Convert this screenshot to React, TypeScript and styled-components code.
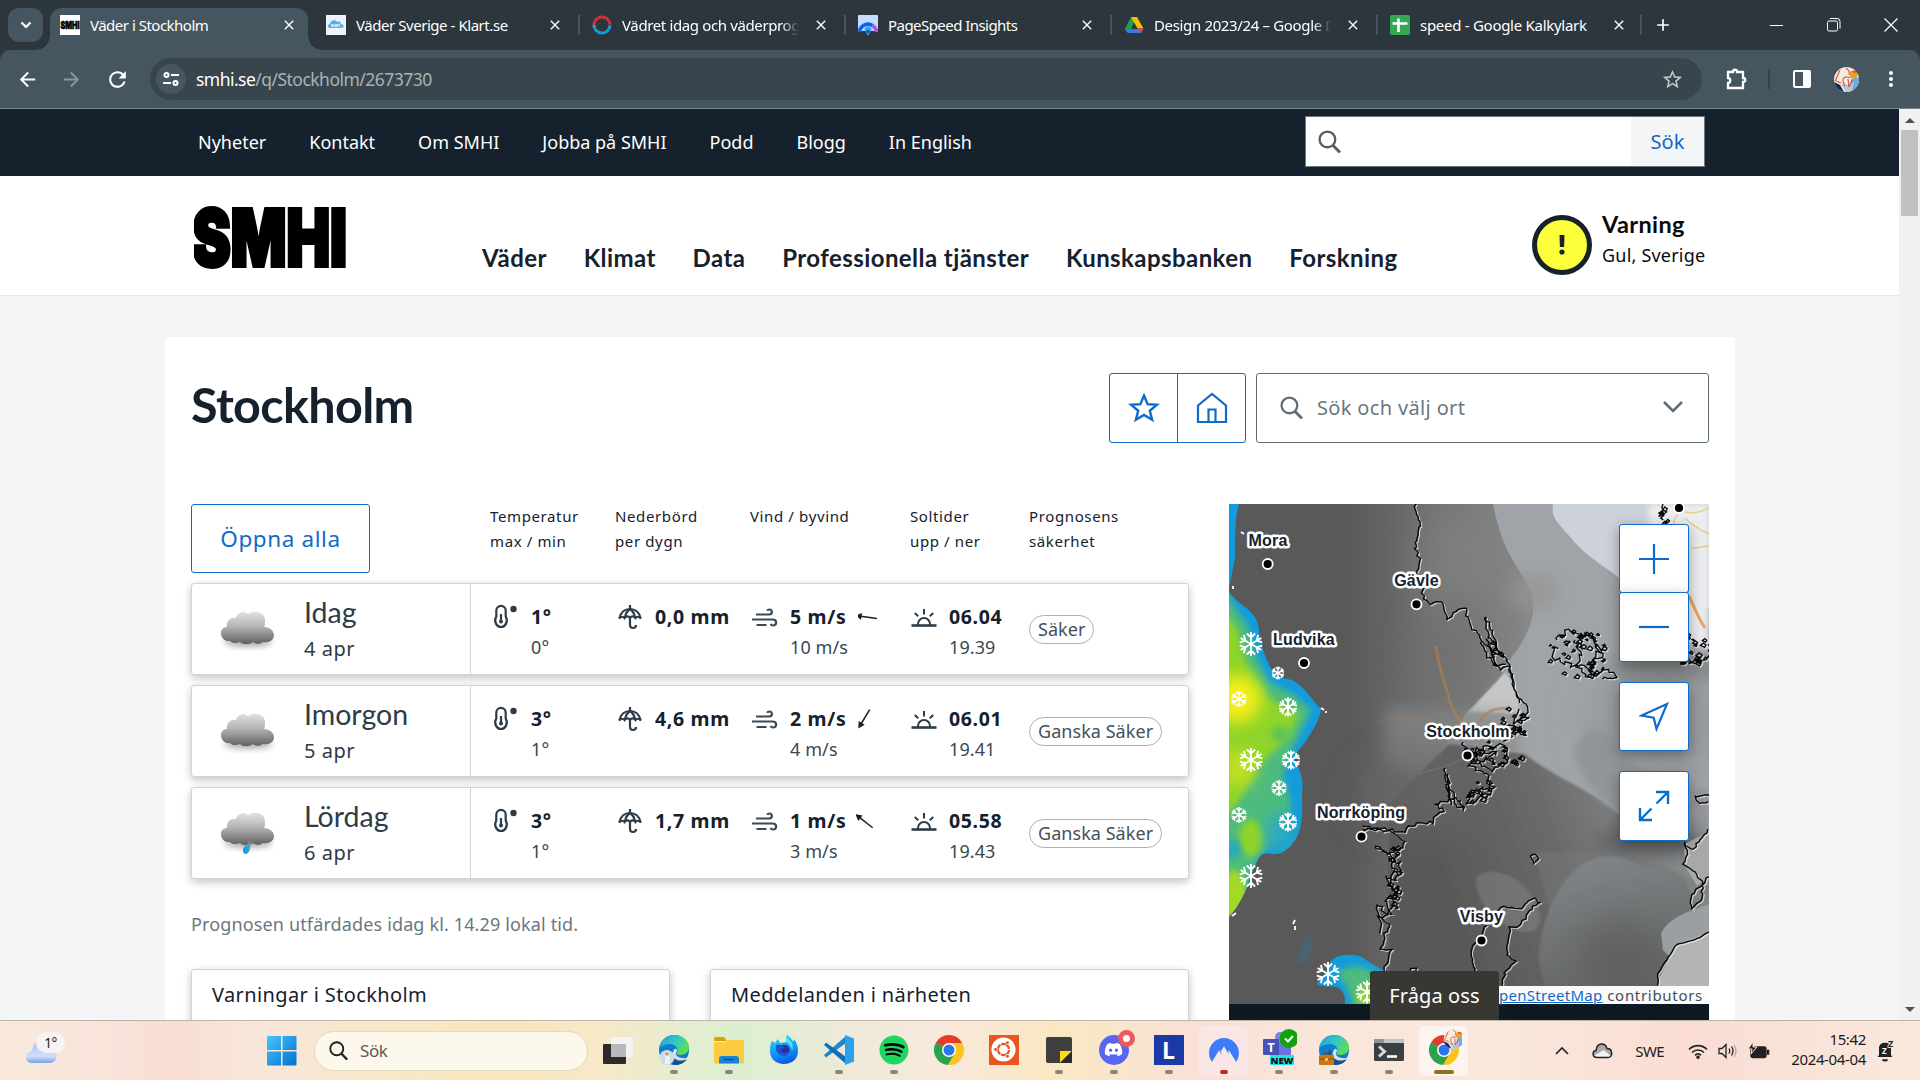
import React from "react";
import styled, { createGlobalStyle, css } from "styled-components";
import { FaSpotify, FaDiscord, FaUbuntu } from "react-icons/fa";
import { SiNordvpn } from "react-icons/si";
import { MdArrowBack, MdArrowForward, MdRefresh, MdStarBorder, MdMoreVert, MdClose, MdAdd } from "react-icons/md";

const ui = `"Noto Sans", "Open Sans", sans-serif`;
const body = `"Noto Sans", "Open Sans", sans-serif`;
const display = `Lato, "Open Sans", sans-serif`;
const ink = "#15212c";
const blue = "#0f6bc9";

const Global = createGlobalStyle`
  * { box-sizing: border-box; }
  html, body { margin: 0; padding: 0; overflow: hidden; background: #f4f5f7; }
  svg { display: block; flex: none; }
`;

const Screen = styled.div`
  width: 1920px;
  height: 1080px;
  display: flex;
  flex-direction: column;
  overflow: hidden;
  font-family: ${body};
  color: ${ink};
`;

/* ---------- browser chrome ---------- */

const TabStrip = styled.div`
  height: 50px;
  flex: none;
  display: flex;
  align-items: flex-start;
  padding: 8px 0 0 8px;
  background: #2c363c;
  font-family: ${ui};
`;

const TabSearch = styled.div`
  width: 35px;
  height: 34px;
  margin-right: 7px;
  border-radius: 11px;
  background: #455660;
  display: flex;
  align-items: center;
  justify-content: center;
`;

const Tab = styled.div<{ $active?: boolean; $width?: number }>`
  position: relative;
  width: ${(p) => p.$width ?? 266}px;
  height: 42px;
  display: flex;
  align-items: center;
  padding: 0 0 8px 10px;
  color: #fff;
  ${(p) =>
    p.$active &&
    css`
      width: 258px;
      margin-right: 8px;
      background: #455660;
      border-radius: 12px 12px 0 0;
      &::before,
      &::after {
        content: "";
        position: absolute;
        bottom: 0;
        width: 14px;
        height: 14px;
      }
      &::before {
        left: -14px;
        background: radial-gradient(circle at 0 0, transparent 13.5px, #455660 14px);
      }
      &::after {
        right: -14px;
        background: radial-gradient(circle at 100% 0, transparent 13.5px, #455660 14px);
      }
    `}
`;

const TabTitle = styled.span<{ $spacing: number; $fade?: boolean }>`
  width: 177px;
  margin: 0 14px 0 10px;
  overflow: hidden;
  white-space: nowrap;
  font-size: 15px;
  letter-spacing: ${(p) => p.$spacing}px;
  line-height: 22px;
  ${(p) => p.$fade && css`mask-image: linear-gradient(90deg, #000 90%, transparent 100%);`}
`;

const TabDivider = styled.i`
  width: 2px;
  height: 20px;
  margin-left: auto;
  margin-right: 2px;
  background: #455660;
`;

const NewTab = styled.div`
  height: 34px;
  padding-left: 9px;
  display: flex;
  align-items: center;
  color: #fff;
`;

const WindowButtons = styled.div`
  margin-left: auto;
  height: 34px;
  display: flex;
  align-items: center;
  gap: 43px;
  padding-right: 22px;
`;

const ToolbarBack = styled.div`
  flex: none;
  background: #2c363c;
`;

const Toolbar = styled.div`
  height: 59px;
  display: flex;
  align-items: center;
  padding-left: 16px;
  background: #455660;
  border-bottom: 1px solid #748790;
  border-radius: 10px 10px 0 0;
  color: #fff;
  font-family: ${ui};
`;

const ToolIcon = styled.span<{ $w: number; $dim?: boolean }>`
  width: ${(p) => p.$w}px;
  display: flex;
  color: ${(p) => (p.$dim ? "#8a979e" : "#fff")};
`;

const Address = styled.div`
  width: 1552px;
  height: 42px;
  margin-right: 22px;
  border-radius: 21px;
  background: #39454c;
  display: flex;
  align-items: center;
  padding: 0 18px 0 6px;
  font-size: 17.5px;
  letter-spacing: -0.53px;
  color: #a9b2b7;
  b { font-weight: 400; color: #fff; }
  > svg:last-child { margin-left: auto; color: #c3c9cc; }
`;

const SiteInfo = styled.span`
  width: 30px;
  height: 30px;
  margin-right: 10px;
  border-radius: 50%;
  background: #455660;
  display: flex;
  align-items: center;
  justify-content: center;
`;

const ToolDivider = styled.i`
  width: 2px;
  height: 20px;
  margin: 0 22px 0 20px;
  background: #35424a;
`;

/* ---------- viewport ---------- */

const Viewport = styled.div`
  height: 911px;
  flex: none;
  display: flex;
  overflow: hidden;
`;

const Site = styled.div`
  width: 1899px;
  height: 911px;
  overflow: hidden;
  background: #f4f5f7;
`;

const ScrollTrack = styled.div`
  width: 21px;
  background: #f1f1f1;
  display: flex;
  flex-direction: column;
  align-items: center;
  justify-content: space-between;
`;

const ScrollTop = styled.div`
  display: flex;
  flex-direction: column;
  align-items: center;
`;

const ScrollArrow = styled.i<{ $down?: boolean }>`
  width: 0;
  height: 0;
  margin: ${(p) => (p.$down ? "0 0 8px" : "9px 0 7px")};
  border: 5px solid transparent;
  border-width: ${(p) => (p.$down ? "5px 5px 0" : "0 5px 5px")};
  border-color: ${(p) => (p.$down ? "#505050 transparent transparent" : "transparent transparent #505050")};
`;

const ScrollThumb = styled.i`
  width: 17px;
  height: 86px;
  background: #c1c1c1;
`;

const TopBar = styled.div`
  height: 67px;
  display: flex;
  align-items: center;
  justify-content: space-between;
  padding: 0 194px 0 198px;
  background: ${ink};
`;

const TopLinks = styled.nav`
  display: flex;
  gap: 43px;
  margin-top: -2px;
  font-size: 18px;
  color: #fff;
`;

const SiteSearch = styled.div`
  width: 400px;
  height: 51px;
  margin-top: -3px;
  display: flex;
  align-items: center;
  justify-content: space-between;
  background: #fff;
  border: 1px solid #6a7780;
  padding-left: 12px;
`;

const SearchButton = styled.div`
  width: 73px;
  height: 49px;
  background: #f4f5f7;
  color: #1067c8;
  font-size: 20px;
  display: flex;
  align-items: center;
  justify-content: center;
`;

const Header = styled.header`
  height: 120px;
  display: flex;
  padding-left: 194px;
  background: #fff;
  border-bottom: 1px solid #e6e9ed;
`;

const MainNav = styled.nav`
  display: flex;
  gap: 36.8px;
  padding: 65px 0 0 135px;
  font: 700 24px/34px ${display};
  letter-spacing: 0.43px;
  white-space: nowrap;
`;

const Warning = styled.div`
  display: flex;
  gap: 10px;
  margin-left: auto;
  padding: 39px 194px 0 0;
`;

const WarningBadge = styled.div`
  width: 60px;
  height: 60px;
  border-radius: 50%;
  border: 5px solid ${ink};
  background: #fdff3a;
  display: flex;
  align-items: center;
  justify-content: center;
`;

const WarningText = styled.div`
  width: 103px;
  margin-top: -6px;
  color: #0a0a0a;
  white-space: nowrap;
  h4 { margin: 0; font: 700 23.5px/31px ${display}; letter-spacing: 0.4px; }
  p { margin: 0; font-size: 18px; line-height: 31px; letter-spacing: 0.2px; }
`;

const Card = styled.main`
  width: 1570px;
  height: 700px;
  margin: 41px 0 0 165px;
  padding: 36px 26px 0;
  background: #fff;
  border-radius: 4px 4px 0 0;
`;

const TitleRow = styled.div`
  display: flex;
  height: 70px;
  margin-bottom: 61px;
`;

const Title = styled.h1`
  margin: 1px auto 0 0;
  font: 700 48.5px/60px ${display};
  letter-spacing: -0.65px;
`;

const ButtonPair = styled.div`
  width: 137px;
  display: grid;
  grid-template-columns: 67px 68px;
  margin-right: 10px;
  border: 1px solid ${blue};
  border-radius: 3px;
  span {
    display: flex;
    align-items: center;
    justify-content: center;
  }
  span + span { border-left: 1px solid ${blue}; }
`;

const PlaceSelect = styled.div`
  width: 453px;
  border: 1px solid #5f6d76;
  border-radius: 3px;
  display: flex;
  align-items: center;
  padding: 0 25px 2px 23px;
  font-size: 20px;
  letter-spacing: 0.35px;
  color: #6a7780;
  span { margin: 0 auto 0 14px; }
`;

const Columns = styled.div`
  display: grid;
  grid-template-columns: 998px 480px;
  justify-content: space-between;
`;

const dataColumns = "125px 135px 160px 119px 1fr";

const TableHead = styled.div`
  height: 79px;
  display: flex;
`;

const OpenAll = styled.div`
  width: 179px;
  height: 69px;
  margin-right: 120px;
  flex: none;
  border: 1px solid ${blue};
  border-radius: 3px;
  color: ${blue};
  font-size: 22.5px;
  letter-spacing: 0.6px;
  display: flex;
  align-items: center;
  justify-content: center;
`;

const Labels = styled.div`
  flex: 1;
  display: grid;
  grid-template-columns: ${dataColumns};
  font-size: 15px;
  line-height: 25px;
  letter-spacing: 0.62px;
  white-space: pre-line;
`;

const Row = styled.section`
  height: 92px;
  margin-bottom: 10px;
  display: flex;
  border: 1px solid #cfd3da;
  border-radius: 3px;
  background: #fff;
  box-shadow: 0 3px 8px rgba(0, 0, 0, 0.24);
  color: #2c3c48;
`;

const DayCell = styled.div`
  width: 279px;
  display: flex;
  border-right: 1px solid #cfd3da;
  padding: 9px 0 0 20px;
`;

const DayText = styled.div`
  margin-left: 18px;
  h3 { margin: 0 0 4px; font: 400 28.5px/38px ${display}; letter-spacing: 0; }
  p { margin: 0; font-size: 20px; line-height: 28px; letter-spacing: 0.55px; }
`;

const DataCells = styled.div`
  flex: 1;
  display: grid;
  grid-template-columns: ${dataColumns};
  padding: 17px 0 0 19px;
`;

const Cell = styled.div`
  display: flex;
`;

const IconBox = styled.div<{ $w: number }>`
  width: ${(p) => p.$w}px;
  padding-top: 2px;
`;

const Values = styled.div`
  b { display: block; font-size: 19.5px; line-height: 31px; letter-spacing: 0.65px; color: ${ink}; white-space: nowrap; }
  span { display: block; font-size: 18px; line-height: 31px; letter-spacing: 0.1px; color: #3a4852; white-space: nowrap; }
`;

const ArrowBox = styled.div`
  margin: 3px 0 0 10px;
`;

const Pill = styled.span`
  height: 29px;
  margin-top: 14px;
  padding: 0 8px;
  border: 1px solid #a9b1ba;
  border-radius: 15px;
  font-size: 18px;
  line-height: 27px;
  letter-spacing: 0.05px;
  color: #44515b;
`;

const Issued = styled.p`
  margin: 33px 0 32px;
  font-size: 18px;
  line-height: 25px;
  letter-spacing: 0.14px;
  color: #6a7780;
`;

const Notices = styled.div`
  display: grid;
  grid-template-columns: 479px 479px;
  justify-content: space-between;
`;

const Notice = styled.div`
  height: 100px;
  padding: 11px 20px;
  border: 1px solid #cfd3da;
  border-radius: 3px;
  background: #fff;
  box-shadow: 0 3px 8px rgba(0, 0, 0, 0.24);
  font-size: 20px;
  line-height: 28px;
  letter-spacing: 0.38px;
`;

const MapPanel = styled.aside`
  position: relative;
  width: 480px;
  height: 600px;
  background: #0d1a21;
`;

const MapControls = styled.div`
  position: absolute;
  top: 20px;
  right: 20px;
  width: 70px;
  display: flex;
  flex-direction: column;
`;

const MapButton = styled.div<{ $gap?: number; $joined?: boolean }>`
  height: ${(p) => (p.$joined ? 69 : 70)}px;
  margin-top: ${(p) => p.$gap ?? 0}px;
  border: 1px solid ${blue};
  border-radius: 3px;
  background: #fff;
  box-shadow: 0 4px 14px rgba(0, 0, 0, 0.35);
  display: flex;
  align-items: center;
  justify-content: center;
`;

const Attribution = styled.div`
  position: absolute;
  top: 482px;
  right: 0;
  height: 18px;
  padding: 0 6px;
  background: rgba(255, 255, 255, 0.97);
  font-size: 15px;
  line-height: 18px;
  letter-spacing: 0.7px;
  color: #444d55;
  white-space: nowrap;
  a { color: ${blue}; text-decoration: underline; letter-spacing: 0.3px; }
`;

const AskUs = styled.div`
  position: absolute;
  top: 467px;
  left: 141px;
  width: 129px;
  height: 60px;
  border-radius: 3px 3px 0 0;
  background: #383732;
  color: #fff;
  font-size: 20px;
  line-height: 50px;
  letter-spacing: 0.1px;
  text-align: center;
`;

/* ---------- taskbar ---------- */

const Taskbar = styled.footer`
  height: 60px;
  flex: none;
  display: flex;
  align-items: center;
  border-top: 1px solid #bdb3a8;
  background: linear-gradient(90deg, #f8e9dc 0, #f9e2d9 130px, #f9ddd4 170px, #f8e6da 260px, #f7e8c6 390px, #f9e6be 510px, #f7e8c8 600px, #e6edcf 680px, #dcefd0 735px, #efe9da 860px, #f8e9dc 940px, #fae7c2 1050px, #f9e6cc 1120px, #fadfd6 1200px, #fae6da 1330px, #f9e8dc 1500px, #fadcd3 1690px, #f9e2d8 1790px, #f9e9dc 1920px);
  font-family: ${ui};
  color: #1b1b1b;
`;

const WeatherWidget = styled.div`
  width: 267px;
  padding-left: 24px;
`;

const TaskSearch = styled.div`
  width: 274px;
  height: 40px;
  margin: 0 15px 0 17px;
  display: flex;
  align-items: center;
  padding-left: 14px;
  border: 1px solid #e3d9be;
  border-radius: 20px;
  background: #fdf8ec;
  font-size: 17px;
  letter-spacing: -0.4px;
  color: #5c5953;
  span { margin-left: 12px; }
`;

const Apps = styled.div`
  display: grid;
  grid-template-columns: repeat(15, 55px);
  margin-left: 13px;
`;

const AppSlot = styled.div<{ $tile?: string }>`
  width: 49px;
  height: 50px;
  justify-self: center;
  display: flex;
  flex-direction: column;
  align-items: center;
  padding-top: 9px;
  border-radius: 5px;
  background: ${(p) => p.$tile ?? "transparent"};
`;

const AppIcon = styled.div`
  width: 30px;
  height: 30px;
  display: flex;
  justify-content: center;
  align-items: flex-end;
`;

const Indicator = styled.i<{ $color: string; $w: number }>`
  width: ${(p) => p.$w}px;
  height: 4px;
  margin-top: 5px;
  border-radius: 2px;
  background: ${(p) => p.$color};
`;

const Tray = styled.div`
  margin-left: auto;
  display: flex;
  align-items: center;
  padding-right: 25px;
`;

const Lang = styled.span`
  margin: 0 24px 0 22px;
  font-size: 15px;
  letter-spacing: -0.6px;
`;

const Clock = styled.div`
  width: 90px;
  margin: -4px 11px 0 6px;
  text-align: right;
  font-size: 15px;
  line-height: 20px;
  letter-spacing: -0.35px;
  white-space: nowrap;
`;

/* ---------- icons ---------- */

const Magnifier = ({ size, color, stroke = 2 }: { size: number; color: string; stroke?: number }) => (
  <svg width={size} height={size} viewBox="0 0 22 22" fill="none" stroke={color} strokeWidth={stroke}>
    <circle cx="9" cy="9" r="7.5" />
    <path d="M14.2 14.5L21 21.5" strokeWidth={stroke * 1.25} />
  </svg>
);

const Logo = () => (
  <svg width="153" height="120" viewBox="0 0 153 120">
    <text x="-2" y="89.5" fontFamily="Inter, Lato, sans-serif" fontWeight="900" fontSize="78.500" textLength="155" lengthAdjust="spacingAndGlyphs" stroke="#000" strokeWidth="4">
      SMHI
    </text>
  </svg>
);

const Cloud = ({ rain }: { rain?: boolean }) => (
  <svg width="74" height="74" viewBox="0 0 74 74">
    <defs>
      <linearGradient id="cloudFill" x1="0" y1="0" x2="0" y2="1">
        <stop offset="0" stopColor="#e2e2e2" />
        <stop offset="0.45" stopColor="#b4b4b4" />
        <stop offset="1" stopColor="#62605f" />
      </linearGradient>
      <linearGradient id="drop" x1="0.8" y1="0" x2="0.3" y2="1">
        <stop offset="0" stopColor="#8b949a" />
        <stop offset="0.5" stopColor="#2fa6e0" />
        <stop offset="1" stopColor="#0a9be6" />
      </linearGradient>
      <filter id="soft" x="-20%" y="-20%" width="140%" height="160%">
        <feGaussianBlur stdDeviation="3" />
      </filter>
    </defs>
    <g transform={rain ? "translate(0 -3)" : undefined}>
      <ellipse cx="36" cy="49" rx="24" ry="5" fill="#000" opacity="0.32" filter="url(#soft)" />
      <path
        d="M9 41c0-4 3-6 6-6-1-6 4-10 9-9 1-6 9-8 12-4 7-5 17-1 17 6 0 3 0 6-1 7 6 0 10 4 10 8 0 6-6 8-11 7-4 3-8 2-10 0-4 3-10 3-13 0-4 2-9 1-10-1-5 1-9-3-9-8z"
        transform="translate(0 -1)"
        fill="url(#cloudFill)"
      />
    </g>
    {rain && <path d="M38 43c1 5 0 14-4 14-4 0-4-6-1-8 3-2 4-4 5-6z" fill="url(#drop)" />}
  </svg>
);

const Thermo = () => (
  <svg width="30" height="28" viewBox="0 0 30 28" fill="none" stroke="#2c3c48" strokeWidth="2.2">
    <path d="M6.300 14V8a4.700 4.700 0 0 1 9.400 0v6c3 5-.5 10.500-4.700 10.500S3.300 19 6.300 14z" transform="translate(0 -.5)" />
    <path d="M11 11v8" />
    <circle cx="11" cy="18.500" r="2" fill="#2c3c48" stroke="none" />
    <circle cx="23.500" cy="6" r="3.200" fill="#2c3c48" stroke="none" />
  </svg>
);

const Umbrella = () => (
  <svg width="28" height="28" viewBox="0 0 28 28" fill="none" stroke="#2c3c48" strokeWidth="2.200">
    <path d="M4.500 15.500C5.500 9 10 6 15 6s9.500 3 10.500 9.500" />
    <path d="M15 2v4M15 6c-3 2-4.500 5-5 8.500M15 6c3 2 4.500 5 5 8.500" />
    <path d="M4 15.500c2-2.500 4.500-2 5.500-.5 1.500-2 4-2.500 5.500 0 1.500-2.500 4-2 5.500 0 1-1.500 3.500-2 5.500.5" />
    <path d="M15 15v7c0 4 6 4 6 0" />
  </svg>
);

const Wind = () => (
  <svg width="28" height="28" viewBox="0 0 28 28" fill="none" stroke="#3a4955" strokeWidth="2.200">
    <path d="M6 11.500h13c4 0 3.500-5 .5-5-1.200 0-2 .5-2.400 1.300M2 16.500h20.500c5 0 4.500 6 .5 6-1.300 0-2-.6-2.500-1.500M6.500 22h10" />
  </svg>
);

const Sunrise = () => (
  <svg width="28" height="28" viewBox="0 0 28 28" fill="none" stroke="#2c3c48" strokeWidth="2">
    <path d="M1.500 22.500h25" strokeWidth="2.600" />
    <path d="M8 22v-1a6 6 0 0 1 12 0v1" />
    <path d="M14 6v5.500M4.800 10l3.400 3.200M23.200 10l-3.400 3.200" />
  </svg>
);

const WindArrow = ({ angle }: { angle: number }) => (
  <svg width="26" height="26" viewBox="0 0 26 26">
    <g transform={`translate(-5 0) rotate(${angle} 13 13)`} stroke={ink} fill={ink}>
      <path d="M6 13h18" strokeWidth="1.500" />
      <path d="M2 13l6.500-3.500v7z" stroke="none" />
    </g>
  </svg>
);

/* ---------- favicons ---------- */

const SmhiIcon = () => (
  <svg width="20" height="20" viewBox="0 0 20 20">
    <rect width="20" height="20" fill="#fff" />
    <text x="0.500" y="13.500" fontFamily="Inter, sans-serif" fontWeight="900" fontSize="10" textLength="19" lengthAdjust="spacingAndGlyphs" stroke="#000" strokeWidth="0.600">SMHI</text>
  </svg>
);
const KlartIcon = () => (
  <svg width="20" height="20" viewBox="0 0 20 20">
    <rect width="20" height="20" fill="#eef2fa" />
    <path d="M4 13c-3 0-3-4 0-4 0-4 6-5 7-2 3-1 4 0 4 2 3 0 4 4 0 4z" fill="#58aee8" />
    <text x="5" y="12" fontFamily="Inter, sans-serif" fontWeight="700" fontSize="4" fill="#fff">klart</text>
  </svg>
);
const RingIcon = () => (
  <svg width="20" height="20" viewBox="0 0 20 20" fill="none" strokeWidth="3">
    <path d="M2 10a8 8 0 0 0 16 0" stroke="#17a3dc" strokeDasharray="3.700 .4" />
    <path d="M2 10a8 8 0 0 1 16 0" stroke="#d6323a" strokeDasharray="3.700 .4" />
  </svg>
);
const SpeedIcon = () => (
  <svg width="20" height="24" viewBox="0 -2 20 24">
    <rect width="20" height="20" rx="1" fill="#c5dcfb" />
    <path d="M0 20v-4h20v4z" fill="#2c363c" />
    <path d="M1.500 17a8.500 8.500 0 0 1 13-6.500" fill="none" stroke="#0a62f5" strokeWidth="3.500" />
    <path d="M14.500 10.500a8 8 0 0 1 4 6.500" fill="none" stroke="#b94be8" strokeWidth="3.500" />
    <path d="M6.500 15l3.500 6 3.500-6a3.500 3.500 0 0 0-7 0z" fill="#2fa8f7" />
    <circle cx="10" cy="16.500" r="1.800" fill="#0a4ed0" />
  </svg>
);
const DriveIcon = () => (
  <svg width="20" height="20" viewBox="0 0 20 20">
    <path d="M7 2h6L6 18H4l-3-4z" fill="#1ea350" />
    <path d="M7 2h6l6.500 11.500h-6z" fill="#fbbc04" />
    <path d="M1 14h18.500L17 18H4z" fill="#3c79e8" />
    <path d="M13.500 13.500h6L17 18z" fill="#ea4335" />
    <path d="M10 8l3 5.500H7z" fill="#2c363c" />
  </svg>
);
const SheetIcon = () => (
  <svg width="20" height="20" viewBox="0 0 20 20">
    <rect width="20" height="20" rx="2" fill="#34a853" />
    <path d="M8.500 3.500v13.500M2.500 8.500h15" stroke="#fff" strokeWidth="2.600" />
  </svg>
);

const Avatar = ({ size = 25 }: { size?: number }) => (
  <svg width={size} height={size} viewBox="0 0 25 25">
    <defs>
      <clipPath id="av"><circle cx="12.500" cy="12.500" r="12.500" /></clipPath>
    </defs>
    <g clipPath="url(#av)">
      <rect width="25" height="25" fill="#f6ebdf" />
      <path d="M0 15l6 3 4 7H0z" fill="#16264f" />
      <path d="M17 12l8-2v15h-9z" fill="#6fa9e0" />
      <path d="M7 17l5 8h6l2-10-4 3z" fill="#b8c4dc" />
      <path d="M6 3c-2 4-3 8-5 11M2 14l5 2M12 1c3 2 4 4 3 7M9 13c0-3 4-4 7-2M9 13c0 3 1 4 2 6M14 12l1 8M18 13l-3 7" stroke="#d5503f" strokeWidth="1.100" fill="none" />
      <circle cx="19.500" cy="7.500" r="4" fill="#e8a02c" />
      <path d="M17 5l5-2 1 3z" fill="#d5503f" />
    </g>
  </svg>
);

/* ---------- map ---------- */

type Pt = [number, number];

const random = (seed: number) => () => {
  seed = (seed * 16807) % 2147483647;
  return seed / 2147483647 - 0.5;
};

/** Subdivides a polyline and shakes each vertex so it reads as a coastline. */
const coast = (pts: Pt[], amp: number, seed: number) => {
  const r = random(seed);
  let d = `M${pts[0][0]} ${pts[0][1]}`;
  for (let i = 1; i < pts.length; i++) {
    const [x0, y0] = pts[i - 1];
    const [x1, y1] = pts[i];
    const n = Math.max(1, Math.round(Math.hypot(x1 - x0, y1 - y0) / 3));
    for (let k = 1; k <= n; k++) {
      const x = x0 + ((x1 - x0) * k) / n + r() * amp;
      const y = y0 + ((y1 - y0) * k) / n + r() * amp;
      d += `L${x.toFixed(1)} ${y.toFixed(1)}`;
    }
  }
  return d;
};

const islands = (cx: number, cy: number, w: number, h: number, count: number, seed: number) => {
  const r = random(seed);
  let d = "";
  for (let i = 0; i < count; i++) {
    const a = r() * Math.PI * 2;
    const q = Math.sqrt(r() + 0.5);
    const x = cx + (Math.cos(a) * q * w) / 2;
    const y = cy + (Math.sin(a) * q * h) / 2;
    const s = 0.8 + (r() + 0.5) * 2.6;
    d += `M${(x - s).toFixed(1)} ${y.toFixed(1)}l${s.toFixed(1)} ${(-s + r() * 2).toFixed(1)}l${(s * 0.9).toFixed(1)} ${(s * 0.7).toFixed(1)}l${(-s * 0.5 + r()).toFixed(1)} ${(s * 0.8).toFixed(1)}z`;
  }
  return d;
};

const shores = [
  coast([[187, 0], [186, 8], [192, 18], [189, 30], [187, 45], [190, 55], [188, 68], [194, 82], [194, 95], [200, 99], [214, 99], [219, 114], [226, 107], [236, 104], [240, 120], [250, 132], [262, 146], [266, 160]], 3, 11),
  coast([[257, 113], [259, 130], [268, 146], [279, 158], [283, 180], [291, 196], [300, 205], [292, 215], [302, 212], [284, 220], [290, 206]], 3.5, 23),
  coast([[257, 113], [263, 128], [272, 150], [262, 148], [258, 135], [268, 162], [276, 160]], 3, 29),
  coast([[252, 138], [262, 158], [270, 166], [280, 162], [286, 186], [292, 200]], 3.5, 31),
  coast([[272, 235], [278, 222], [290, 224], [296, 232], [284, 226], [276, 238]], 5, 37),
  coast([[234, 238], [240, 252], [256, 244], [275, 240], [278, 256], [262, 266], [250, 258], [268, 250], [248, 246], [240, 262], [258, 270], [262, 280]], 5, 41),
  coast([[258, 276], [266, 286], [252, 284], [240, 290], [238, 302], [248, 296], [260, 290], [262, 276]], 4.5, 43),
  coast([[216, 264], [219, 284], [222, 300], [217, 270], [222, 284], [228, 304], [236, 304], [226, 294], [214, 298], [206, 300], [216, 306], [206, 312], [204, 318], [186, 320], [176, 327], [155, 325], [134, 322]], 3.5, 47),
  coast([[134, 325], [150, 325], [165, 329], [177, 339], [170, 346], [162, 350], [146, 342], [164, 352], [162, 362], [172, 368], [166, 378], [156, 372], [166, 386], [164, 400], [158, 410], [148, 400], [150, 410], [160, 420], [156, 430], [154, 440], [152, 444], [162, 446], [158, 458], [156, 466], [152, 480]], 3.5, 53),
  coast([[160, 352], [170, 360], [174, 372], [164, 366], [160, 380], [168, 390], [158, 396], [162, 408], [150, 414], [152, 430]], 4.5, 59),
  coast([[258, 421], [253, 430], [242, 445], [243, 458], [246, 465], [246, 484]], 2, 61),
  coast([[262, 410], [275, 402], [282, 404], [292, 405], [302, 394], [312, 398], [304, 402], [296, 415], [290, 422], [281, 424], [279, 436], [279, 452], [286, 457], [276, 468], [272, 482]], 2.6, 67),
  coast([[301, 352], [306, 350], [310, 355], [305, 359], [301, 352]], 1, 71),
  coast([[328, 136], [336, 126], [350, 130], [362, 132], [370, 146], [362, 166], [350, 162], [336, 160], [322, 152], [330, 142]], 6, 73),
  coast([[346, 136], [352, 150], [348, 164], [360, 174], [362, 158], [374, 150], [366, 138]], 5, 79),
  coast([[366, 172], [378, 166], [386, 172], [372, 176]], 4, 83),
  coast([[434, 0], [438, 8], [432, 18]], 5, 89),
  coast([[456, 338], [462, 346], [468, 340], [472, 336], [480, 326]], 3.5, 97),
  coast([[456, 338], [458, 350], [454, 360], [464, 366], [474, 378], [472, 396], [464, 404], [461, 396], [466, 386], [474, 380], [480, 372]], 2.2, 101),
  coast([[480, 428], [465, 436], [448, 440], [436, 458], [429, 470], [429, 482]], 1, 103),
  coast([[480, 291], [466, 293], [470, 299], [480, 298]], 1.5, 107),
  coast([[181, 472], [182, 464], [187, 464], [187, 472]], 2, 113),
  islands(256, 250, 44, 34, 22, 201),
  islands(285, 216, 26, 40, 14, 203),
  islands(350, 150, 62, 50, 40, 207),
  islands(458, 146, 60, 30, 54, 211),
  islands(250, 288, 30, 24, 10, 213),
  islands(166, 382, 12, 90, 16, 217),
  islands(290, 258, 10, 26, 6, 219),
  islands(268, 150, 12, 36, 6, 223),
  islands(436, 12, 8, 18, 6, 227),
].join("");

const Flake = ({ x, y, r }: { x: number; y: number; r: number }) => (
  <g transform={`translate(${x} ${y})`} stroke="#fff" strokeWidth={r > 9 ? 1.9 : 1.5} fill="none">
    {[0, 60, 120, 180, 240, 300].map((a) => (
      <path key={a} transform={`rotate(${a})`} d={`M0 0V${-r}M${-r * 0.35} ${-r * 0.88}L0 ${-r * 0.55}L${r * 0.35} ${-r * 0.88}`} />
    ))}
  </g>
);

const flakes: [number, number, number][] = [
  [22, 140, 12], [49, 169, 6.5], [10, 195, 8], [59, 203, 9.5], [22, 256, 12], [62, 256, 9.5],
  [50, 284, 8], [10, 311, 8], [59, 318, 9.5], [22, 372, 12], [99, 470, 12], [138, 488, 11.5],
];

const cities: [string, number, number, number, number][] = [
  ["Mora", 39, 41.500, 38.700, 60],
  ["Gävle", 187.500, 81.500, 187.500, 100.300],
  ["Ludvika", 75, 140.500, 75, 159],
  ["Stockholm", 239, 232.500, 238.500, 251.500],
  ["Norrköping", 132, 313.500, 132.500, 332.700],
  ["Visby", 252.500, 417.500, 252.500, 436.500],
];

const WeatherMap = () => (
  <svg width="480" height="500" viewBox="0 0 480 500">
    <defs>
      <linearGradient id="land" x1="0" y1="0" x2="1" y2="0">
        <stop offset="0.250" stopColor="#595959" />
        <stop offset="0.400" stopColor="#6e6e6e" />
        <stop offset="0.620" stopColor="#868787" />
      </linearGradient>
      <linearGradient id="south" x1="0" y1="0.300" x2="1" y2="0">
        <stop offset="0.100" stopColor="#595959" />
        <stop offset="0.450" stopColor="#6a6a6b" />
        <stop offset="0.850" stopColor="#8d9092" />
      </linearGradient>
      <linearGradient id="hill" x1="0" y1="0" x2="0.300" y2="1">
        <stop offset="0" stopColor="#84888a" />
        <stop offset="1" stopColor="#626364" />
      </linearGradient>
      <filter id="b1" x="-10%" y="-10%" width="120%" height="120%"><feGaussianBlur stdDeviation="1" /></filter>
      <filter id="b3" x="-30%" y="-30%" width="160%" height="160%"><feGaussianBlur stdDeviation="3" /></filter>
      <filter id="b8" x="-40%" y="-40%" width="180%" height="180%"><feGaussianBlur stdDeviation="8" /></filter>
      <filter id="b20" x="-60%" y="-60%" width="220%" height="220%"><feGaussianBlur stdDeviation="18" /></filter>
      <clipPath id="rain">
        <path d="M0 0h10l-3 14-1 20 0 20-4 20-2 10zM0 88C10 102 24 104 29 120c2 16 4 26 10 38 4 12 12 16 24 18 14 8 20 20 29 29-2 14-8 20-15 32-8 10-12 14-11 20 6 10 9 20 7 32 0 12 1 24-2 36-4 14-14 24-24 25-6 1-12-4-17 4-8 14-10 24-14 34-6 12-10 18-16 25z" />
        <path d="M88 480c2-4 6-6 10-14 4-10 6-12 12-14 14-3 22-1 30 6 14 8 20 12 34 16v26h-58c0-10-2-14-8-17-8-1-14 0-20-3z" />
      </clipPath>
    </defs>
    <rect width="480" height="500" fill="url(#land)" />
    <ellipse cx="228" cy="60" rx="40" ry="60" fill="#858686" opacity="0.500" filter="url(#b20)" />
    <path d="M264 0c10 50 24 60 34 80 8 16 8 26 2 44-4 10-10 20-18 30l-10 20-34 34-20 30-38 56 90 20 216 60V0z" fill="#a0a4a8" />
    <path d="M324 0c-2 14 4 18 18 34 18 22 36 28 60 50l78 20V0z" fill="#cdd2d9" />
    <ellipse cx="305" cy="88" rx="26" ry="20" fill="#969494" opacity="0.700" filter="url(#b8)" />
    <ellipse cx="225" cy="150" rx="36" ry="60" fill="#6f6f6f" opacity="0.500" filter="url(#b20)" />
    <path d="M420 0h60v145l-40-10-20-30z" fill="#ecedf0" filter="url(#b3)" />
    <path d="M276 168c-12 14-22 24-36 40l52 2-6-28z" fill="#c4c6c7" filter="url(#b1)" />
    <path d="M156 202l84 5 48 4 0 40-60 40-70-30z" fill="#858686" opacity="0.700" filter="url(#b8)" />
    <path d="M296 250c30 24 58 32 86 54 18 14 40 30 98 38v159H160V300l60-60z" fill="url(#south)" filter="url(#b1)" />
    <ellipse cx="190" cy="290" rx="60" ry="40" fill="#666" opacity="0.700" filter="url(#b20)" />
    <ellipse cx="430" cy="215" rx="70" ry="60" fill="#94999c" filter="url(#b20)" />
    <path d="M345 250c4-20 20-32 36-20 22 40 60 60 99 54v40c-60 10-120-20-135-74z" fill="#8e9093" opacity="0.700" filter="url(#b3)" />
    <ellipse cx="440" cy="165" rx="60" ry="9" fill="#6c6f71" opacity="0.700" filter="url(#b8)" />
    <path d="M305 349c40-2 80 0 110 8 24 4 40 16 65 22v60H330z" fill="#77797a" opacity="0.450" filter="url(#b1)" />
    <ellipse cx="425" cy="338" rx="60" ry="16" fill="#646566" opacity="0.900" filter="url(#b8)" />
    <path d="M310 454c2-40 20-78 44-94 20-12 34-10 60 2 20 4 36 6 44 16 4 20 14 30 22 34v90H326c-10-20-14-30-16-48z" fill="url(#hill)" filter="url(#b1)" />
    <ellipse cx="390" cy="450" rx="40" ry="36" fill="#585959" opacity="0.600" filter="url(#b20)" />
    <path d="M247 380c-2-12 14-16 34-8 16 8 30 28 31 44-4 16-20 14-32 8-20-12-30-26-33-44z" fill="#8b8e90" opacity="0.400" filter="url(#b1)" />
    <path d="M432 430c6-16 30-24 48-30v66c-16 0-34-6-46-20z" fill="#9b9fa2" />
    <path d="M480 428l-32 12-19 36v24h51z" fill="#b3b4b4" />
    <path d="M455 340l25-12v44l-12 10-12-20z" fill="#a7a8a8" />

    <g fill="none" stroke="#b3804f" opacity="0.600">
      <path d="M207 142c2 20 10 40 14 56 5 12 8 16 12 26M250 218c8-12 16-14 32-14" strokeWidth="3" />
      <path d="M150 218c24-6 40-4 56-1M190 270c20-6 40-10 50-20" strokeWidth="1.500" opacity="0.500" />
    </g>
    <g fill="none" stroke="#eccb86" strokeWidth="1.500">
      <path d="M450 10c-8 6-6 14 0 20M456 8c10 2 16 0 24-4M456 14c10 10 16 12 24 16M462 44c8 0 14-2 18-2" />
      <path d="M460 92c6 12 8 20 16 32" strokeWidth="3" stroke="#e6a667" />
    </g>

    <g clipPath="url(#rain)">
      <rect width="180" height="500" fill="#139bdb" />
      <path d="M-20 60L4 100 20 124 26 150 40 178 64 190 82 206 66 240 54 270 62 300 56 330 30 352 10 400-20 420z" fill="#4dbb7d" filter="url(#b3)" />
      <path d="M-20 90L8 124 18 160 40 194 70 210 60 232 30 262 8 300-20 330z" fill="#8fd42c" filter="url(#b3)" />
      <ellipse cx="8" cy="195" rx="24" ry="24" fill="#f6ee14" filter="url(#b8)" />
      <ellipse cx="10" cy="264" rx="16" ry="18" fill="#c4e022" filter="url(#b8)" />
      <ellipse cx="52" cy="230" rx="10" ry="8" fill="#60c455" filter="url(#b3)" />
      <ellipse cx="22" cy="334" rx="12" ry="18" fill="#8fd42c" filter="url(#b3)" />
      <ellipse cx="4" cy="390" rx="14" ry="24" fill="#a2da26" filter="url(#b3)" />
      <ellipse cx="52" cy="330" rx="14" ry="22" fill="#2aa9c4" filter="url(#b8)" />
      <ellipse cx="2" cy="345" rx="10" ry="10" fill="#29aab8" filter="url(#b3)" />
      <path d="M108 470c10-12 30-10 60 10v30h-44c0-16-6-30-16-40z" fill="#4dbb7d" filter="url(#b3)" />
      <ellipse cx="142" cy="492" rx="14" ry="12" fill="#8fd42c" filter="url(#b3)" />
    </g>
    <path d="M82 430l-4 10-10 22 6-2 8-16z" transform="translate(0 -2)" fill="#2b7ba6" opacity="0.700" filter="url(#b3)" />
    <path d="M92 204l3 2M97 207v2M12 28l3 2M4 82v3M3 412l4-3M64 420l2-4M66 426v-4" stroke="#fff" strokeWidth="1.800" />

    <path d={shores} fill="none" stroke="#ececec" strokeWidth="1.200" opacity="0.750" transform="translate(1.400 1.200)" />
    <path d={shores} fill="none" stroke="#050505" strokeWidth="1.300" />

    {flakes.map(([x, y, r], i) => <Flake key={i} x={x} y={y} r={r} />)}
    {cities.map(([name, x, y, dx, dy]) => (
      <g key={name}>
        <circle cx={dx} cy={dy} r="5" fill="#000" stroke="#fff" strokeWidth="1.800" />
        <text x={x} y={y} textAnchor="middle" fontFamily="'Liberation Sans', Arial, sans-serif" fontWeight="700" fontSize="16" letterSpacing="0.200" fill={ink} stroke="#fff" strokeWidth="5" strokeLinejoin="round" paintOrder="stroke">
          {name}
        </text>
      </g>
    ))}
    <circle cx="450" cy="4" r="5" fill="#000" stroke="#fff" strokeWidth="1.800" />
  </svg>
);

/* ---------- taskbar icons ---------- */

const EdgeIcon = ({ badge }: { badge: "photo" | "case" }) => (
  <svg width="30" height="30" viewBox="0 0 30 30">
    <defs>
      <linearGradient id="e1" x1="0" y1="0" x2="1" y2="0.500">
        <stop offset="0" stopColor="#1c9fe0" />
        <stop offset="0.600" stopColor="#35c9c2" />
        <stop offset="1" stopColor="#5fdc52" />
      </linearGradient>
    </defs>
    <circle cx="15" cy="15" r="15" fill="#0d7fd0" />
    <path d="M0 13C2 4 9 0 16 0c9 0 14 7 14 12 0 6-5 8-9 8-3 0-4-1-3-3 2-4-2-8-7-8-5 0-9 2-11 4z" fill="url(#e1)" />
    <path d="M12 14c-2 7 4 13 16 10-4 6-10 7-15 5-6-3-6-12-1-15z" fill="#134f94" />
    <path d="M18 16c-3 4 1 8 10 7 1 0 1 0 0 1-8 4-16 0-14-7 1-4 4-4 4-1z" fill="#f7ead8" opacity="0.900" />
    {badge === "photo" ? (
      <>
        <circle cx="8" cy="22.500" r="7.500" fill="#c8dcea" />
        <path d="M6 29c0-8 0-11 2-12 3 1 3 6 3 12z" fill="#f5efe9" />
        <circle cx="8" cy="19" r="1.600" fill="#b98f6e" />
      </>
    ) : (
      <>
        <rect y="20" width="15" height="10" rx="1" fill="#c87813" />
        <path d="M0 24h15" stroke="#8d4e07" />
        <path d="M5 20v-2h5v2" stroke="#7a4a12" strokeWidth="1.500" fill="none" />
        <rect x="6" y="23" width="3" height="3" fill="#f4c542" />
      </>
    )}
  </svg>
);
const FolderIcon = () => (
  <svg width="30" height="30" viewBox="0 0 30 30">
    <path d="M0 3.500Q0 2 1.500 2H10l3 4H0z" fill="#e0a106" />
    <path d="M0 7h12l2-2h15q1 0 1 1v21q0 1.500-1.500 1.500h-27Q0 28.500 0 27z" fill="#fccb3e" />
    <path d="M5 28.500V24q0-3 3-3h14q3 0 3 3v4.500z" fill="#1784d8" />
    <path d="M10 24.500h10" stroke="#0a4f91" strokeWidth="1.600" />
  </svg>
);
const FirefoxIcon = () => (
  <svg width="30" height="30" viewBox="0 0 30 30">
    <defs>
      <linearGradient id="ff" x1="0.300" y1="0" x2="0.600" y2="1">
        <stop offset="0" stopColor="#27d3f5" />
        <stop offset="0.600" stopColor="#1391f5" />
        <stop offset="1" stopColor="#0a55dc" />
      </linearGradient>
    </defs>
    <path d="M3 6l3 2 3-4 2 4 6-1c0-3 0-5 1-7 3 2 5 4 6 7l1-3c3 4 4 8 4 12 0 8-6 13-14 13S1 24 1 16c0-4 0-7 2-10z" fill="url(#ff)" />
    <circle cx="15" cy="15" r="5.500" fill="#2a2f9e" />
    <path d="M7 10c4-1 7 0 9 3-3 0-3 2-5 2 2 4 7 4 10 0 0 6-12 9-14-1z" fill="#1a56d6" />
    <path d="M17 2c6 4 8 8 6 14 0-4-3-8-6-9z" fill="#52e3fb" />
  </svg>
);
const CodeIcon = () => (
  <svg width="30" height="30" viewBox="0 0 30 30">
    <path d="M22 1L0 20l2 2.500L22 8z" fill="#1f86cf" />
    <path d="M22 29L0 10l2-2.500L22 22z" fill="#0f6fb8" />
    <path d="M21 0l9 3.500v23L21 30z" fill="#2ba0ec" />
  </svg>
);
const ChromeIcon = ({ photo }: { photo?: boolean }) => (
  <svg width="36" height="36" viewBox="-3 -6 36 36">
    <path d="M15 15L2 7.500A15 15 0 0 1 28 7.500z" fill="#e33b2e" />
    <path d="M15 15l13-7.500A15 15 0 0 1 15 30z" fill="#fcc31e" />
    <path d="M15 15v15A15 15 0 0 1 2 7.500z" fill="#2ba24c" />
    <path d="M15 8h13l-7 11z" fill="#fcc31e" />
    <path d="M2 7.500h14v7z" fill="#e33b2e" />
    <path d="M21 18l-6.500 12-2-9z" fill="#2ba24c" />
    <path d="M21 18l-7 12 8-1 3-9z" fill="#fcc31e" />
    <circle cx="15" cy="15" r="7" fill="#fff" />
    <circle cx="15" cy="15" r="5.500" fill="#2f74e8" />
    {photo && <g transform="translate(14.500 -6) scale(.8)"><Avatar /></g>}
  </svg>
);
const SquareTile = styled.div<{ $bg: string }>`
  width: 30px;
  height: 30px;
  display: flex;
  align-items: center;
  justify-content: center;
  background: ${(p) => p.$bg};
  color: #fff;
  font: 700 23px/30px "Open Sans", sans-serif;
`;
const NotesIcon = () => (
  <svg width="30" height="30" viewBox="0 0 30 30">
    <rect x="2" y="2" width="26" height="26" rx="2" fill="#3f3f3f" />
    <path d="M16 16h12L16 28z" fill="#fddc12" />
    <path d="M28 16v12H16z" fill="#2a2a2a" />
  </svg>
);
const Badged = styled.div`
  position: relative;
  height: 30px;
`;
const RedDot = styled.i`
  position: absolute;
  top: -5px;
  right: -6px;
  width: 17px;
  height: 17px;
  border-radius: 50%;
  border: 5px solid #ee5a5a;
  background: #fff;
`;
const DiscordDisc = styled.div`
  width: 30px;
  height: 30px;
  border-radius: 50%;
  background: #5865f2;
  color: #fff;
  display: flex;
  align-items: center;
  justify-content: center;
`;
const TeamsIcon = () => (
  <svg width="36" height="36" viewBox="0 -6 36 36">
    <circle cx="19" cy="2" r="5" fill="#7b83eb" />
    <path d="M12 7h18v12q0 6-9 6t-9-6z" fill="#6b72dc" />
    <rect x="2" y="4" width="16" height="16" rx="1" fill="#4651b8" />
    <text x="10" y="17" textAnchor="middle" fontFamily="Open Sans, sans-serif" fontWeight="700" fontSize="13" fill="#fff">T</text>
    <rect x="9" y="20" width="24" height="10" rx="1" fill="#1ee3e3" />
    <text x="21" y="28.500" textAnchor="middle" fontFamily="Open Sans, sans-serif" fontWeight="800" fontSize="9.500" fill="#111">NEW</text>
    <circle cx="28" cy="3.500" r="9.500" fill="#13a10e" />
    <path d="M24 3.500l3 3 5-5.500" stroke="#fff" strokeWidth="2" fill="none" />
  </svg>
);
const TerminalIcon = () => (
  <svg width="30" height="30" viewBox="0 0 30 30">
    <rect y="4" width="30" height="22" rx="1.500" fill="#3b3f42" />
    <path d="M0 8V5.500Q0 4 1.500 4h27Q30 4 30 5.500V8z" fill="#c2c5c8" />
    <path d="M0 8V5.500Q0 4 1.500 4H10v4z" fill="#8f9396" />
    <path d="M5 11.500l5.500 5L5 21.500" stroke="#d7dadc" strokeWidth="3" fill="none" />
    <path d="M13 21.500h10" stroke="#fff" strokeWidth="2.600" />
  </svg>
);

/* ---------- data ---------- */

const tabs = [
  { icon: <SmhiIcon />, title: "Väder i Stockholm", spacing: -0.5, active: true },
  { icon: <KlartIcon />, title: "Väder Sverige - Klart.se", spacing: -0.45 },
  { icon: <RingIcon />, title: "Vädret idag och väderprognoser", spacing: -0.37, fade: true },
  { icon: <SpeedIcon />, title: "PageSpeed Insights", spacing: -0.55 },
  { icon: <DriveIcon />, title: "Design 2023/24 – Google Drive", spacing: -0.35, fade: true },
  { icon: <SheetIcon />, title: "speed - Google Kalkylark", spacing: -0.28, width: 264 },
];

const days = [
  { name: "Idag", date: "4 apr", max: "1°", min: "0°", rain: "0,0 mm", wind: "5 m/s", gust: "10 m/s", angle: 8, up: "06.04", down: "19.39", sure: "Säker" },
  { name: "Imorgon", date: "5 apr", max: "3°", min: "1°", rain: "4,6 mm", wind: "2 m/s", gust: "4 m/s", angle: -59, up: "06.01", down: "19.41", sure: "Ganska Säker" },
  { name: "Lördag", date: "6 apr", max: "3°", min: "1°", rain: "1,7 mm", wind: "1 m/s", gust: "3 m/s", angle: 38, up: "05.58", down: "19.43", sure: "Ganska Säker", wet: true },
];

const gray = "#8d857b";
const apps: { icon: React.ReactNode; mark?: string; w?: number; tile?: string }[] = [
  { icon: <EdgeIcon badge="photo" />, mark: gray },
  { icon: <FolderIcon />, mark: gray },
  { icon: <FirefoxIcon /> },
  { icon: <CodeIcon />, mark: gray },
  {
    icon: (
      <svg width="30" height="30" viewBox="0 0 30 30">
        <circle cx="15" cy="15" r="13" fill="#000" />
        <FaSpotify size={30} color="#1ed760" />
      </svg>
    ),
    mark: gray,
  },
  { icon: <ChromeIcon /> },
  { icon: <SquareTile $bg="#e95420"><FaUbuntu size={25} /></SquareTile> },
  { icon: <NotesIcon />, mark: gray },
  { icon: <Badged><DiscordDisc><FaDiscord size={19} /></DiscordDisc><RedDot /></Badged>, mark: gray },
  { icon: <SquareTile $bg="#1b3aa8">L</SquareTile>, mark: gray },
  { icon: <SiNordvpn size={30} color="#3e7bfa" />, mark: "#c42b1c", tile: "#fbe6e6" },
  { icon: <TeamsIcon />, mark: gray },
  { icon: <EdgeIcon badge="case" />, mark: gray },
  { icon: <TerminalIcon />, mark: gray },
  { icon: <ChromeIcon photo />, mark: "#94701c", w: 20, tile: "#fcf4ee" },
];

export default function App() {
  return (
    <Screen>
      <Global />
      <TabStrip>
        <TabSearch>
          <svg width="12" height="8" viewBox="0 0 12 8" fill="none" stroke="#fff" strokeWidth="2.200"><path d="M1.500 1.500L6 6l4.500-4.500" /></svg>
        </TabSearch>
        {tabs.map((t) => (
          <Tab key={t.title} $active={t.active} $width={t.width}>
            {t.icon}
            <TabTitle $spacing={t.spacing} $fade={t.fade}>{t.title}</TabTitle>
            <MdClose size={16} />
            {!t.active && <TabDivider />}
          </Tab>
        ))}
        <NewTab><MdAdd size={20} /></NewTab>
        <WindowButtons>
          <svg width="14" height="14" stroke="#fff"><path d="M0 7.500h13" /></svg>
          <svg width="14" height="14" fill="none" stroke="#fff"><rect x="0.500" y="3" width="10" height="10" rx="1.500" /><path d="M3 .5h7q3 0 3 3v7" /></svg>
          <svg width="14" height="14" stroke="#fff" strokeWidth="1.200"><path d="M.5 .5l13 13M13.500 .5l-13 13" /></svg>
        </WindowButtons>
      </TabStrip>
      <ToolbarBack>
        <Toolbar>
          <ToolIcon $w={44}><MdArrowBack size={23} /></ToolIcon>
          <ToolIcon $w={45} $dim><MdArrowForward size={23} /></ToolIcon>
          <ToolIcon $w={45}><MdRefresh size={25} /></ToolIcon>
          <Address>
            <SiteInfo>
              <svg width="16" height="16" fill="none" stroke="#fff" strokeWidth="2"><circle cx="3.500" cy="4" r="2" /><path d="M8 4h8M0 12h8" /><circle cx="12.500" cy="12" r="2" /></svg>
            </SiteInfo>
            <span><b>smhi.se</b>/q/Stockholm/2673730</span>
            <MdStarBorder size={23} />
          </Address>
          <svg width="24" height="24" viewBox="0 0 24 24" fill="none" stroke="#fff" strokeWidth="2.300"><path d="M4 5h5c0-3 4-3 4 0h6v6c3 0 3 4 0 4v6H4v-5c3 0 3-5 0-5z" /></svg>
          <ToolDivider />
          <svg width="20" height="20" viewBox="0 0 20 20"><rect x="2" y="2" width="16" height="16" rx="1" fill="none" stroke="#fff" strokeWidth="2" /><path d="M11 2h7v16h-7z" fill="#fff" /></svg>
          <ToolIcon $w={22} />
          <Avatar />
          <ToolIcon $w={20} />
          <MdMoreVert size={24} />
        </Toolbar>
      </ToolbarBack>

      <Viewport>
        <Site>
          <TopBar>
            <TopLinks>
              {["Nyheter", "Kontakt", "Om SMHI", "Jobba på SMHI", "Podd", "Blogg", "In English"].map((l) => <span key={l}>{l}</span>)}
            </TopLinks>
            <SiteSearch>
              <Magnifier size={23} color="#5b5b5b" stroke={2.200} />
              <SearchButton>Sök</SearchButton>
            </SiteSearch>
          </TopBar>
          <Header>
            <Logo />
            <MainNav>
              {["Väder", "Klimat", "Data", "Professionella tjänster", "Kunskapsbanken", "Forskning"].map((l) => <span key={l}>{l}</span>)}
            </MainNav>
            <Warning>
              <WarningBadge>
                <svg width="8" height="20" viewBox="0 0 8 20" fill={ink}><path d="M1.500 0h5l-.4 12H1.900z" /><circle cx="4" cy="17" r="2.600" /></svg>
              </WarningBadge>
              <WarningText>
                <h4>Varning</h4>
                <p>Gul, Sverige</p>
              </WarningText>
            </Warning>
          </Header>

          <Card>
            <TitleRow>
              <Title>Stockholm</Title>
              <ButtonPair>
                <span>
                  <svg width="32" height="32" viewBox="0 0 32 32" fill="none" stroke={blue} strokeWidth="2.400"><path d="M16 3.500l3.600 8.600 9.300.7-7.100 6 2.300 9-8.100-4.900-8.100 4.900 2.300-9-7.100-6 9.300-.7z" /></svg>
                </span>
                <span>
                  <svg width="32" height="32" viewBox="0 0 32 32" fill="none" stroke={blue} strokeWidth="2.200"><path d="M2 13.500L16 2l14 11.500V30H2z" /><path d="M12.500 30V17.500h7V30" /></svg>
                </span>
              </ButtonPair>
              <PlaceSelect>
                <Magnifier size={23} color="#5f6d76" stroke={2.200} />
                <span>Sök och välj ort</span>
                <svg width="20" height="12" viewBox="0 0 20 12" fill="none" stroke="#5f6d76" strokeWidth="2.600"><path d="M1 1l9 9 9-9" /></svg>
              </PlaceSelect>
            </TitleRow>

            <Columns>
              <div>
                <TableHead>
                  <OpenAll>Öppna alla</OpenAll>
                  <Labels>
                    <span>{"Temperatur\nmax / min"}</span>
                    <span>{"Nederbörd\nper dygn"}</span>
                    <span>Vind / byvind</span>
                    <span>{"Soltider\nupp / ner"}</span>
                    <span>{"Prognosens\nsäkerhet"}</span>
                  </Labels>
                </TableHead>
                {days.map((d) => (
                  <Row key={d.name}>
                    <DayCell>
                      <Cloud rain={d.wet} />
                      <DayText><h3>{d.name}</h3><p>{d.date}</p></DayText>
                    </DayCell>
                    <DataCells>
                      <Cell><IconBox $w={41}><Thermo /></IconBox><Values><b>{d.max}</b><span>{d.min}</span></Values></Cell>
                      <Cell><IconBox $w={40}><Umbrella /></IconBox><Values><b>{d.rain}</b></Values></Cell>
                      <Cell>
                        <IconBox $w={40}><Wind /></IconBox>
                        <Values><b>{d.wind}</b><span>{d.gust}</span></Values>
                        <ArrowBox><WindArrow angle={d.angle} /></ArrowBox>
                      </Cell>
                      <Cell><IconBox $w={39}><Sunrise /></IconBox><Values><b>{d.up}</b><span>{d.down}</span></Values></Cell>
                      <Cell><Pill>{d.sure}</Pill></Cell>
                    </DataCells>
                  </Row>
                ))}
                <Issued>Prognosen utfärdades idag kl. 14.29 lokal tid.</Issued>
                <Notices>
                  <Notice>Varningar i Stockholm</Notice>
                  <Notice>Meddelanden i närheten</Notice>
                </Notices>
              </div>
              <MapPanel>
                <WeatherMap />
                <MapControls>
                  <MapButton $joined>
                    <svg width="30" height="30" stroke={blue} strokeWidth="2.200"><path d="M15 0v30M0 15h30" /></svg>
                  </MapButton>
                  <MapButton $gap={-1}>
                    <svg width="30" height="30" stroke={blue} strokeWidth="2.200"><path d="M0 15h30" /></svg>
                  </MapButton>
                  <MapButton $gap={20} $joined>
                    <svg width="30" height="30" fill="none" stroke={blue} strokeWidth="2.200"><path d="M28 2L2.500 13.500l12.200 2.200L17.500 27z" /></svg>
                  </MapButton>
                  <MapButton $gap={20}>
                    <svg width="32" height="32" fill="none" stroke={blue} strokeWidth="2.400"><path d="M18 2h12v12M30 2L18.500 13.500M2 18v12h12M2 30l11.500-11.500" /></svg>
                  </MapButton>
                </MapControls>
                <Attribution>© <a>OpenStreetMap</a> contributors</Attribution>
                <AskUs>Fråga oss</AskUs>
              </MapPanel>
            </Columns>
          </Card>
        </Site>
        <ScrollTrack>
          <ScrollTop><ScrollArrow /><ScrollThumb /></ScrollTop>
          <ScrollArrow $down />
        </ScrollTrack>
      </Viewport>

      <Taskbar>
        <WeatherWidget>
          <svg width="44" height="38" viewBox="0 0 44 38">
            <defs>
              <linearGradient id="wc" x1="0" y1="0" x2="0" y2="1"><stop offset="0" stopColor="#a8c3f5" /><stop offset="0.700" stopColor="#cfe0f8" /><stop offset="1" stopColor="#7ba0e8" /></linearGradient>
            </defs>
            <path d="M7 33c-8 0-8-11 0-12 1-12 15-14 18-4 9 1 9 16 0 16z" fill="url(#wc)" transform="translate(1 -2)" />
            <rect x="12" y="0" width="29" height="21" rx="10.500" fill="#f8f5f2" opacity="0.960" />
            <text x="26.500" y="15.500" textAnchor="middle" fontFamily="Noto Sans, sans-serif" fontSize="13.500" letterSpacing="-0.500" fill="#222">1°</text>
          </svg>
        </WeatherWidget>
        <svg width="30" height="30" viewBox="0 0 30 30">
          <defs>
            <linearGradient id="win" x1="0" y1="0" x2="1" y2="1"><stop offset="0" stopColor="#44c6fb" /><stop offset="1" stopColor="#0370cf" /></linearGradient>
          </defs>
          <path d="M1 0h13v14H0V1q0-1 1-1zM15.500 0H28.500q1 0 1 1v13h-14zM0 15.500h14v14H1q-1 0-1-1zM15.500 15.500h14v13q0 1-1 1h-13z" fill="url(#win)" />
        </svg>
        <TaskSearch>
          <Magnifier size={19} color="#222" stroke={2.200} />
          <span>Sök</span>
        </TaskSearch>
        <svg width="30" height="30" viewBox="0 0 30 30">
          <rect x="0" y="8" width="23" height="20" rx="1" fill="#2b2b2b" />
          <rect x="8" y="1" width="22" height="20" rx="1" fill="#f3f3f3" />
          <rect x="8" y="8" width="15" height="13" fill="#b9b9b9" />
        </svg>
        <Apps>
          {apps.map((a, i) => (
            <AppSlot key={i} $tile={a.tile}>
              <AppIcon>{a.icon}</AppIcon>
              {a.mark && <Indicator $color={a.mark} $w={a.w ?? 8} />}
            </AppSlot>
          ))}
        </Apps>
        <Tray>
          <svg width="14" height="9" fill="none" stroke="#222" strokeWidth="1.600"><path d="M1 8l6-6 6 6" /></svg>
          <ToolIcon $w={23} />
          <svg width="21" height="17" viewBox="0 0 21 17">
            <path d="M5 15.500C0 15.500 0 9 4 8.500 5 .5 13 0 15 6.500c6 0 6 9 1 9z" fill="#a9a9a9" stroke="#222" strokeWidth="1.500" />
            <path d="M2.500 13.500l9-5.500 7 5.500q-1 1.500-3 1H5z" fill="#f2f2f2" />
          </svg>
          <Lang>SWE</Lang>
          <svg width="20" height="16" viewBox="0 0 20 16" fill="none" stroke="#222" strokeWidth="1.600"><path d="M1 6.500a12.500 12.500 0 0 1 18 0M4 9.500a8.500 8.500 0 0 1 12 0M7 12.300a4.500 4.500 0 0 1 6 0" /><circle cx="10" cy="14.200" r="1" fill="#222" /></svg>
          <ToolIcon $w={10} />
          <svg width="20" height="16" viewBox="0 0 20 16" fill="none" stroke="#222" strokeWidth="1.300"><path d="M1 5.500h3l4-4v13l-4-4H1zM11 5.500q1.500 2.500 0 5M13.500 3.500q3 4.500 0 9" /><path d="M16 2q4 6 0 12" stroke="#aaa" /></svg>
          <ToolIcon $w={10} />
          <svg width="22" height="18" viewBox="0 0 22 18"><rect x="3" y="5" width="15" height="10.500" rx="2" fill="#222" stroke="#222" strokeWidth="1.400" /><path d="M19 8.500h1.500v3.500H19" stroke="#222" strokeWidth="1.600" /><path d="M5 0L0 7h4l-1 5 6-7H5z" fill="#222" stroke="#f9e2d8" /></svg>
          <Clock>15:42<br />2024-04-04</Clock>
          <svg width="18" height="24" viewBox="0 0 18 24"><path d="M2 16V9c0-7 12-7 12 0v7l1.500 2h-15z" fill="#222" /><path d="M5.500 20.500q2.500 2 5 0" fill="none" stroke="#222" strokeWidth="2" /><text x="5" y="14.500" fontFamily="Noto Sans, sans-serif" fontWeight="700" fontSize="8" fill="#fff">Z</text><text x="11" y="8" fontFamily="Noto Sans, sans-serif" fontWeight="700" fontSize="9" fill="#222" stroke="#f9e6dc" strokeWidth="1.500" paintOrder="stroke">Z</text></svg>
        </Tray>
      </Taskbar>
    </Screen>
  );
}
